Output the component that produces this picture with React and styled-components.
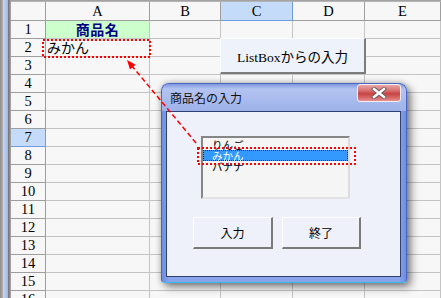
import React from 'react';
import styled, { createGlobalStyle } from 'styled-components';

const Global = createGlobalStyle`
  html, body { margin: 0; padding: 0; width: 441px; height: 298px; overflow: hidden; background: #f7f7f7; }
  #root { width: 441px; height: 298px; }
`;

const JP = `"Noto Sans CJK JP", sans-serif`;
const SERIF = `"Liberation Serif", "Noto Sans CJK JP", serif`;

const Screen = styled.div`
  position: relative;
  width: 441px;
  height: 298px;
  overflow: hidden;
  display: flex;
  background: #f7f7f7;
  font-family: ${SERIF};
`;

const LeftEdge = styled.div`
  flex: none;
  width: 11px;
  display: flex;
`;
const EdgeStrip = styled.div`
  width: ${p => p.$w}px;
  background: ${p => p.$bg};
`;

const Sheet = styled.div`
  flex: 1;
  display: flex;
  flex-direction: column;
  min-width: 0;
`;

const TopStrip = styled.div`
  height: 2px;
  flex: none;
  background: linear-gradient(#9a9a9a, #bdbdbd);
`;

const Grid = styled.div`
  display: grid;
  grid-template-columns: 35px 104px 71px 72px 72px 1fr;
  grid-template-rows: 19px repeat(16, 18px);
`;

const HeadCell = styled.div`
  box-sizing: border-box;
  border-right: 1px solid ${p => (p.$sel ? '#6f9be0' : '#9e9e9e')};
  border-bottom: 1px solid ${p => (p.$sel ? '#6f9be0' : '#9e9e9e')};
  background: ${p => (p.$sel ? '#c4dcfa' : '#f7f7f7')};
  display: flex;
  align-items: center;
  justify-content: center;
  font-size: 14.5px;
  color: #000;
  line-height: 1;
`;

const Cell = styled.div`
  box-sizing: border-box;
  border-right: 1px solid #c4c4c4;
  border-bottom: 1px solid #c4c4c4;
  background: ${p => p.$bg || '#f7f7f7'};
  display: flex;
  align-items: center;
  justify-content: ${p => (p.$center ? 'center' : 'flex-start')};
  padding-left: ${p => (p.$center ? 0 : 1)}px;
  font-family: ${JP};
  font-size: 14px;
  font-weight: ${p => (p.$bold ? 700 : 400)};
  letter-spacing: ${p => (p.$bold ? '0.5px' : '0')};
  color: ${p => p.$color || '#000'};
  line-height: 17px;
  white-space: nowrap;
`;

const SheetButton = styled.div`
  position: absolute;
  left: 220px;
  top: 38px;
  width: 146px;
  height: 36px;
  box-sizing: border-box;
  background: #eef2fb;
  border-top: 1px solid #fdfdff;
  border-left: 1px solid #fdfdff;
  border-right: 2px solid #7c7c7c;
  border-bottom: 2px solid #7c7c7c;
  display: flex;
  align-items: center;
  justify-content: center;
  font-family: ${SERIF};
  font-size: 13.5px;
  color: #000;
`;

const Dialog = styled.div`
  position: absolute;
  left: 161px;
  top: 83px;
  width: 246px;
  height: 200px;
  box-sizing: border-box;
  border-radius: 8px 8px 4px 4px;
  background: linear-gradient(to right, #6f8ee0, #8aa4ea 3%, #8aa4ea 97%, #6f8ee0);
  border: 1px solid #4a66c4;
  border-bottom-color: #38b8f0;
  box-shadow: 4px 4px 9px rgba(0, 0, 0, 0.45), 0 0 6px rgba(0, 0, 0, 0.25);
  display: flex;
  flex-direction: column;
  padding: 0 5px 5px 4px;
`;

const TitleBar = styled.div`
  height: 27px;
  flex: none;
  margin: 0 -5px 0 -4px;
  border-radius: 7px 7px 0 0;
  background: linear-gradient(#7e98de, #b3c3f1 18%, #aabcee 55%, #9db2ea);
  display: flex;
  align-items: center;
  padding-left: 8px;
`;

const TitleText = styled.div`
  flex: 1;
  font-family: ${JP};
  font-size: 12px;
  color: #111;
  line-height: 1;
  margin-top: 1px;
`;

const CloseButton = styled.div`
  align-self: flex-start;
  margin-right: 5px;
  width: 44px;
  height: 18px;
  box-sizing: border-box;
  border: 1px solid #f4f0f0;
  border-radius: 3px;
  background: linear-gradient(#e9a7a7, #d97070 35%, #c84444 55%, #d86a6a 80%, #e89090);
  display: flex;
  align-items: center;
  justify-content: center;
`;

const Client = styled.div`
  flex: 1;
  box-sizing: border-box;
  border: 1px solid #2f3f72;
  background: #eef1fa;
  display: flex;
  flex-direction: column;
  padding-top: 24px;
`;

const ListBox = styled.div`
  margin-left: 34px;
  width: 149px;
  height: 63px;
  box-sizing: border-box;
  border-top: 2px solid #868686;
  border-left: 2px solid #868686;
  border-right: 2px solid #dcdcdc;
  border-bottom: 2px solid #e2e2e2;
  background: #f5f5f5;
  padding-top: 1px;
  overflow: hidden;
`;

const ListItem = styled.div`
  height: 11px;
  line-height: 11px;
  padding-left: 9px;
  font-family: ${JP};
  font-size: 10.5px;
  color: ${p => (p.$sel ? '#fff' : '#000')};
  background: ${p => (p.$sel ? '#3399ff' : 'transparent')};
  outline: ${p => (p.$sel ? '1px dotted #3a2a00' : 'none')};
  outline-offset: -1px;
  white-space: nowrap;
`;

const ButtonRow = styled.div`
  display: flex;
  gap: 9px;
  margin-top: 18px;
  padding-left: 26px;
`;

const DialogButton = styled.div`
  width: ${p => p.$w}px;
  height: 32px;
  box-sizing: border-box;
  background: #eef1fa;
  border-top: 1px solid #ffffff;
  border-left: 1px solid #ffffff;
  border-right: 2px solid #7a7a7a;
  border-bottom: 2px solid #7a7a7a;
  display: flex;
  align-items: center;
  justify-content: center;
  font-family: ${JP};
  font-size: 12px;
  color: #000;
`;

const Annotations = styled.svg`
  position: absolute;
  left: 0;
  top: 0;
  pointer-events: none;
`;

const COLS = ['A', 'B', 'C', 'D', 'E'];
const ROWS = Array.from({ length: 16 }, (_, i) => i + 1);

function cellProps(r, c) {
  if (r === 1 && c === 'A') return { $bg: '#ccffcc', $bold: true, $center: true, $color: '#000080', text: '商品名' };
  if (r === 2 && c === 'A') return { text: 'みかん' };
  return { text: '' };
}

export default function App() {
  return (
    <>
      <Global />
      <Screen>
        <LeftEdge>
          <EdgeStrip $w={3} $bg="linear-gradient(to right, #8a8a8a, #b4b4b4)" />
          <EdgeStrip $w={5} $bg="linear-gradient(to right, #c6d6f6, #9fb6e8)" />
          <EdgeStrip $w={3} $bg="linear-gradient(to right, #6e6e6e, #a8a8a8)" />
        </LeftEdge>
        <Sheet>
          <TopStrip />
          <Grid>
            <HeadCell />
            {COLS.map(c => (
              <HeadCell key={c} $sel={c === 'C'}>{c}</HeadCell>
            ))}
            {ROWS.map(r => (
              <React.Fragment key={r}>
                <HeadCell $sel={r === 7}>{r}</HeadCell>
                {COLS.map(c => {
                  const { text, ...rest } = cellProps(r, c);
                  return <Cell key={c} {...rest}>{text}</Cell>;
                })}
              </React.Fragment>
            ))}
          </Grid>
        </Sheet>

        <SheetButton>ListBoxからの入力</SheetButton>

        <Dialog>
          <TitleBar>
            <TitleText>商品名の入力</TitleText>
            <CloseButton>
              <svg width="16" height="12" viewBox="0 0 16 12">
                <path d="M3 2 L13 10 M13 2 L3 10" stroke="#6a5a5a" strokeWidth="4.2" strokeLinecap="square" />
                <path d="M3 2 L13 10 M13 2 L3 10" stroke="#ffffff" strokeWidth="2.4" strokeLinecap="square" />
              </svg>
            </CloseButton>
          </TitleBar>
          <Client>
            <ListBox>
              <ListItem>りんご</ListItem>
              <ListItem $sel>みかん</ListItem>
              <ListItem>バナナ</ListItem>
            </ListBox>
            <ButtonRow>
              <DialogButton $w={80}>入力</DialogButton>
              <DialogButton $w={79}>終了</DialogButton>
            </ButtonRow>
          </Client>
        </Dialog>

        <Annotations width="441" height="298" viewBox="0 0 441 298">
          <rect x="43" y="40" width="107" height="17" fill="none" stroke="#ff0000" strokeWidth="2" strokeDasharray="2 2" />
          <rect x="198" y="148" width="157" height="16" fill="none" stroke="#ff0000" strokeWidth="2" strokeDasharray="2 2" />
          <line x1="196" y1="143" x2="132" y2="66" stroke="#ff0000" strokeWidth="1.5" strokeDasharray="5 3" />
          <polygon points="127,60 130,69.5 135.6,64.8" fill="#ff0000" />
        </Annotations>
      </Screen>
    </>
  );
}
